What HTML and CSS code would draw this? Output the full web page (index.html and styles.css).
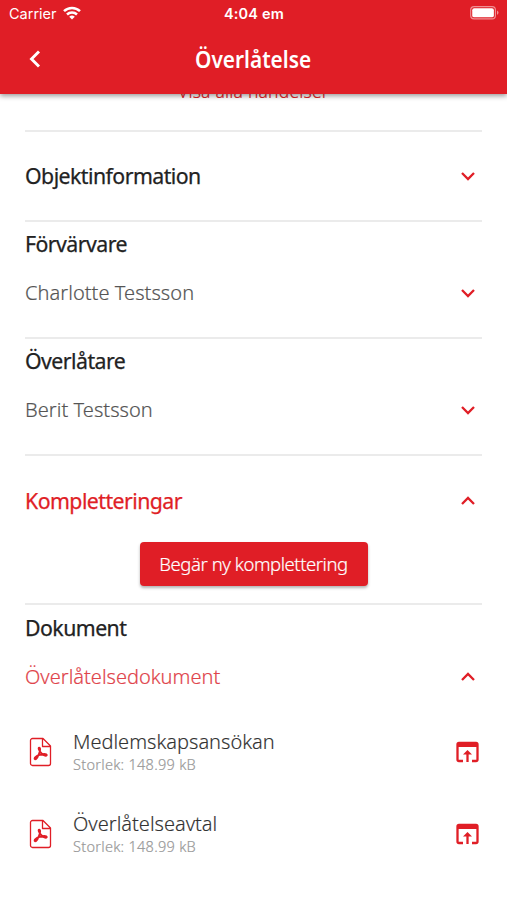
FILE: index.html
```html
<!DOCTYPE html>
<html lang="sv">
<head>
<meta charset="utf-8">
<title>Överlåtelse</title>
<link rel="stylesheet" href="styles.css">
</head>
<body>
<svg class="defs" width="0" height="0">
  <symbol id="down" viewBox="0 0 16 10"><path d="M2 2l6 6 6-6" fill="none" stroke="currentColor" stroke-width="2.3"/></symbol>
  <symbol id="up" viewBox="0 0 16 10"><path d="M2 8l6-6 6 6" fill="none" stroke="currentColor" stroke-width="2.3"/></symbol>
  <symbol id="pdf" viewBox="0 0 24 30"><path d="M3.500 1.500h10.500l7.500 7.500v17.500a2 2 0 0 1-2 2h-16a2 2 0 0 1-2-2v-23a2 2 0 0 1 2-2zM13.500 1.500v8h8" fill="none" stroke="currentColor" stroke-width="1.300" stroke-linejoin="round"/><path d="M10.100 10.700c1.400 0 1.300 3-.1 6.100-1 2.700-2.700 5.400-4 5.400-1.400-.7 1-3.300 4.500-4.400 3.500-1 7-1.200 7.300.1.100 1.600-3 .9-5.200-1.600-2-2-3.800-5.400-2.500-5.600z" fill="none" stroke="currentColor" stroke-width="1.900" stroke-linejoin="round"/></symbol>
  <symbol id="open" viewBox="0 0 24 22"><path d="M7.500 20H3.500A1.500 1.500 0 0 1 2 18.500V3.500A1.500 1.500 0 0 1 3.500 2h17A1.500 1.500 0 0 1 22 3.500v15a1.500 1.500 0 0 1-1.500 1.500h-4" fill="none" stroke="currentColor" stroke-width="2.300"/><path d="M2 2h20v4H2z" fill="currentColor"/><path d="M12 21v-9" stroke="currentColor" stroke-width="2.300"/><path d="M7.500 13.500L12 9l4.500 4.500z" fill="currentColor"/></symbol>
</svg>
<header class="appbar">
  <div class="status">
    <div class="carrier"><span>Carrier</span>
      <svg class="wifi" viewBox="0 0 18 14"><g fill="none" stroke="currentColor" stroke-width="2.500"><path d="M1 5.200a11.500 11.500 0 0 1 16 0"/><path d="M4 8.500a7.200 7.200 0 0 1 10 0"/></g><path d="M6.200 10.700a4.200 4.200 0 0 1 5.600 0L9 13.600z" fill="currentColor"/></svg>
    </div>
    <span class="time">4:04 em</span>
    <svg class="battery" viewBox="0 0 30 15"><rect x=".7" y=".7" width="25.600" height="12.600" rx="3.500" fill="none" stroke="#fff" stroke-opacity=".5" stroke-width="1.200"/><rect x="2.300" y="2.300" width="22.400" height="9.400" rx="2" fill="#fff"/><path d="M28 4.700q3 2.300 0 4.600z" fill="#fff" fill-opacity=".55"/></svg>
  </div>
  <div class="nav">
    <svg class="back" viewBox="0 0 12 18"><path d="M10.500 1.500L3 9l7.500 7.500" fill="none" stroke="currentColor" stroke-width="2.900"/></svg>
    <h1>Överlåtelse</h1>
  </div>
</header>
<main>
  <a class="events">Visa alla händelser</a>
  <section class="single"><div class="row"><h2>Objektinformation</h2><svg class="chev"><use href="#down"/></svg></div></section>
  <section class="person"><h2>Förvärvare</h2><div class="row"><span class="name">Charlotte Testsson</span><svg class="chev"><use href="#down"/></svg></div></section>
  <section class="person"><h2>Överlåtare</h2><div class="row"><span class="name">Berit Testsson</span><svg class="chev"><use href="#down"/></svg></div></section>
  <section class="additions"><div class="row"><h2>Kompletteringar</h2><svg class="chev"><use href="#up"/></svg></div><button><span>Begär ny komplettering</span></button></section>
  <section class="documents">
    <h2>Dokument</h2>
    <div class="row"><span class="name">Överlåtelsedokument</span><svg class="chev"><use href="#up"/></svg></div>
    <ul>
      <li><svg class="pdf"><use href="#pdf"/></svg><div class="file"><span class="filename">Medlemskapsansökan</span><span class="size">Storlek: 148.99 kB</span></div><svg class="open"><use href="#open"/></svg></li>
      <li><svg class="pdf"><use href="#pdf"/></svg><div class="file"><span class="filename">Överlåtelseavtal</span><span class="size">Storlek: 148.99 kB</span></div><svg class="open"><use href="#open"/></svg></li>
    </ul>
  </section>
</main>
</body>
</html>
```
FILE: styles.css
```css
* { box-sizing: border-box; }
body { margin: 0; height: 900px; overflow: hidden; background: #fff; color: #222; font-family: "Noto Sans", sans-serif; }
.defs { position: absolute; }
svg { display: block; flex: none; }
.appbar { position: relative; z-index: 1; height: 94px; background: #e01e26; color: #fff; box-shadow: 0 2px 5px rgba(0,0,0,.4); }
.status { display: grid; grid-template-columns: 1fr auto 1fr; align-items: center; height: 27px; padding: 0 8px 0 9px; font: 14.500px Inter, sans-serif; }
.carrier { display: flex; align-items: center; gap: 6px; }
.wifi { width: 18px; height: 14px; margin-top: -2px; }
.time { font-weight: 600; letter-spacing: .2px; }
.battery { width: 29px; height: 14.500px; justify-self: end; }
.nav { display: grid; grid-template-columns: 1fr auto 1fr; align-items: center; height: 64px; padding: 0 1px 0 28px; }
.nav::after { content: ""; }
.back { width: 13px; height: 18px; }
h1 { margin: 0 27px 0 0; font: 600 23px/32px "Noto Sans", sans-serif; transform: scaleX(.905); padding-bottom: 1px; }
main { padding: 0 25px; }
.events { display: block; height: 36px; margin-top: -15px; margin-bottom: 15px; text-align: center; color: #e01e26; font-size: 17.500px; line-height: 25px; font-weight: 300; letter-spacing: .2px; -webkit-text-stroke: .2px currentColor; }
section { border-top: 2px solid #ebebeb; }
.row { display: flex; align-items: center; justify-content: space-between; padding-right: 6px; height: 40px; }
h2 { margin: 0; font-size: 21.300px; line-height: 30px; font-weight: 400; letter-spacing: -.55px; -webkit-text-stroke: .25px currentColor; white-space: nowrap; }
.name { color: #555; font-size: 20px; line-height: 30px; font-weight: 300; white-space: nowrap; letter-spacing: .05px; -webkit-text-stroke: .2px currentColor; }
.chev { width: 16px; height: 10px; color: #e01e26; }
.single { height: 90px; padding-top: 24px; }
.person { height: 117px; padding-top: 7px; }
.person .row, .documents .row { margin-top: 14px; }
.additions { height: 149px; padding-top: 25px; }
.additions h2, .documents .name { color: #e01e26; }
.additions h2 { margin-top: -1px; }
.documents .name { color: #e0444b; letter-spacing: 0; }
button { display: block; width: 228px; height: 44px; margin: 21px auto 0; padding: 0 0 2px; border: 0; border-radius: 4px; background: #e01e26; color: #fff; font: 300 18.500px "Noto Sans", sans-serif; letter-spacing: -.45px; -webkit-text-stroke: .2px currentColor; box-shadow: 0 2px 3px rgba(0,0,0,.3); white-space: nowrap; }
.documents { padding-top: 8px; }
ul { list-style: none; margin: 14px 0 0; padding: 0; }
li { display: flex; align-items: center; height: 82px; padding-right: 2px; }
.pdf { width: 24px; height: 30px; margin-left: 4px; color: #e01e26; }
.file { flex: 1; margin: -2px 0 0 20px; display: flex; flex-direction: column; }
.filename { color: #333; font-size: 20px; line-height: 26px; font-weight: 300; -webkit-text-stroke: .15px currentColor; }
.size { color: #999; font-size: 14.500px; line-height: 19px; font-weight: 300; letter-spacing: .28px; -webkit-text-stroke: .2px currentColor; }
.open { width: 25px; height: 22px; color: #e01e26; }
```
